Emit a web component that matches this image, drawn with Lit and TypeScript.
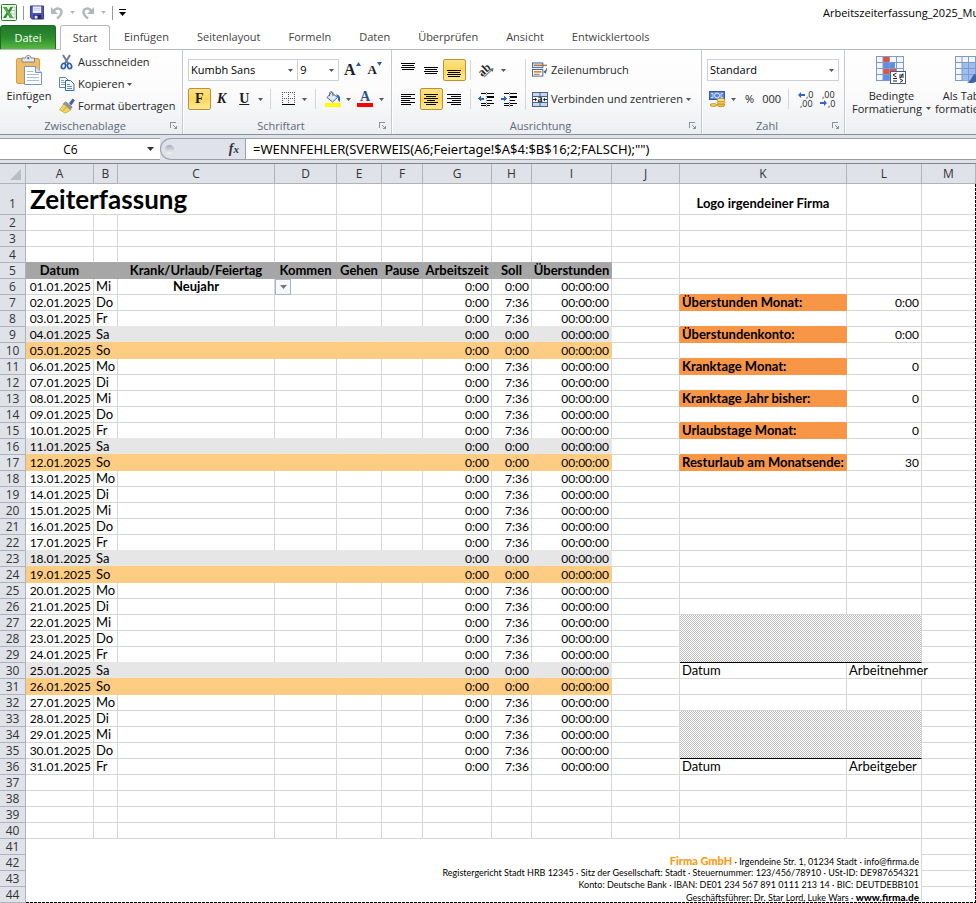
import { LitElement, html, css, svg, nothing, TemplateResult } from "lit";
import { customElement, property } from "lit/decorators.js";
import { classMap } from "lit/directives/class-map.js";

const caret = html`<svg class="caret" width="5" height="3" viewBox="0 0 5 3" aria-hidden="true"><path d="M0 0h5L2.500 3z" fill="currentColor" /></svg>`;

/** Horizontal text lines: each pair is [x, width]. */
const lines = (rows: number[][], h = 14, top = 0) => html`<svg width="15" height=${h} viewBox="0 0 15 ${h}" shape-rendering="crispEdges" aria-hidden="true">
  ${rows.map(([x, w], i) => svg`<rect x=${x} y=${top + i * 2} width=${w} height="1" fill="#000" />`)}
</svg>`;

const spaced = (top: number) => html`<svg width="15" height="16" viewBox="0 0 15 16" shape-rendering="crispEdges" aria-hidden="true">
  ${[[0, 14], [1, 12], [0, 14], [1, 12]].map(([x, w], i) => svg`<rect x=${x} y=${top + [0, 2, 4, 6][i]} width=${w} height="1" fill="#000" />`)}
</svg>`;

const L = [[0, 14], [0, 10], [0, 14], [0, 9], [0, 14], [0, 10]];
const C = [[0, 14], [2, 10], [0, 14], [3, 8], [0, 14], [2, 10]];
const R = [[0, 14], [4, 10], [0, 14], [5, 9], [0, 14], [4, 10]];

const icons = {
  excel: html`<svg width="16" height="17" viewBox="0 0 16 17" aria-hidden="true">
    <rect x=".5" y=".5" width="15" height="16" rx="1" fill="#eef6ea" stroke="#2f7a34" />
    <path d="M10 3h4v11h-4z" fill="#fff" stroke="#a8cfa2" /><path d="M10 6.500h4M10 10h4" stroke="#a8cfa2" />
    <path d="M2 3h3.500l2 3.300L9.400 3H12L8.800 8.400 12.300 14H8.800L6.900 10.400 5 14H2l3.600-5.600z" fill="#2b8a34" />
    <path d="M2 3h2.500l7.800 11H9.800z" fill="#57b04a" /></svg>`,
  save: html`<svg width="14" height="15" viewBox="0 0 15 15" aria-hidden="true">
    <path d="M.5.500h14v14H2L.5 13z" fill="#4a50bd" stroke="#34399a" />
    <rect x="3" y="1" width="9" height="7" fill="#f4f6fb" /><path d="M4 3h7M4 5h7" stroke="#b9c3df" />
    <rect x="4" y="10" width="8" height="4.500" fill="#26295f" /><rect x="5" y="11" width="3" height="3" fill="#e8ebf6" /></svg>`,
  undo: html`<svg width="14" height="14" viewBox="0 0 14 14" aria-hidden="true">
    <path d="M3.500 5.500C5.500 1.500 12 1.500 11.500 6.500c-.3 3-2.500 4.500-4.500 6" fill="none" stroke="#b3b6ba" stroke-width="2.500" /><path d="M1 1v7h7z" fill="#b3b6ba" /></svg>`,
  redo: html`<svg width="14" height="14" viewBox="0 0 14 14" aria-hidden="true">
    <path d="M10.500 5.500C8.500 1.500 2 1.500 2.500 6.500c.3 3 2.500 4.500 4.500 6" fill="none" stroke="#b3b6ba" stroke-width="2.500" /><path d="M13 1v7H6z" fill="#b3b6ba" /></svg>`,
  paste: html`<svg width="28" height="31" viewBox="0 0 28 31" aria-hidden="true">
    <rect x="1.500" y="3.500" width="23" height="25" rx="1.500" fill="#efbd68" stroke="#d99f45" />
    <path d="M7 7V3h3.500c0-1.600 1.200-2.500 2.700-2.500S16 1.400 16 3h3.500v4z" fill="#e7e9ec" stroke="#80858c" /><circle cx="13.200" cy="3.200" r="1.100" fill="#6a6e75" />
    <path d="M9.500 11.500h11l6 6v12h-17z" fill="#fdfeff" stroke="#7b96bd" /><path d="M20.500 11.500v6h6" fill="#d8e4f3" stroke="#7b96bd" />
    <path d="M12 16.500h6M12 19.500h12M12 22.500h12M12 25.500h12" stroke="#a9bddb" /></svg>`,
  cut: html`<svg width="16" height="16" viewBox="0 0 16 16" aria-hidden="true">
    <path d="M4 1l5.500 9M11 1L5.500 10" stroke="#6d7f9c" stroke-width="2" fill="none" />
    <ellipse cx="4.500" cy="12" rx="2" ry="2.700" transform="rotate(20 4.500 12)" fill="none" stroke="#2a5cb0" stroke-width="1.700" />
    <ellipse cx="10.500" cy="12" rx="2" ry="2.700" transform="rotate(-20 10.500 12)" fill="none" stroke="#2a5cb0" stroke-width="1.700" /></svg>`,
  copy: html`<svg width="16" height="16" viewBox="0 0 16 16" aria-hidden="true">
    <path d="M.5 1.500h6l3 3v7h-9z" fill="#fff" stroke="#5a80bb" /><path d="M2 4.500h3M2 6.500h5M2 8.500h5" stroke="#7ea0d4" />
    <path d="M6.500 4.500h5l3.500 3.500v6.500H6.500z" fill="#fff" stroke="#3566ad" /><path d="M8 8.500h3M8 10.500h5M8 12.500h5" stroke="#5d8ad0" /></svg>`,
  brush: html`<svg width="16" height="16" viewBox="0 0 17 16" aria-hidden="true">
    <path d="M11 5l3.500-4.500 2 1.500L13 7z" fill="#4a5fae" stroke="#31407f" stroke-width=".6" />
    <path d="M7 3.500l7 5.500-2 3L4.500 6z" fill="#8c97a5" stroke="#5f6873" stroke-width=".6" />
    <path d="M5 6l7 6c-2 2-4 3-6 3.500C4 14 2 12.500.5 12 2 10.500 4 8.500 5 6z" fill="#f4d565" stroke="#c4982c" stroke-width=".8" /><path d="M4 13l4-4" stroke="#c4982c" /></svg>`,
  growA: html`<svg width="5" height="4" viewBox="0 0 5 4" aria-hidden="true"><path d="M0 4h5L2.500 0z" fill="#2e5ca8" /></svg>`,
  shrinkA: html`<svg width="5" height="4" viewBox="0 0 5 4" aria-hidden="true"><path d="M0 0h5L2.500 4z" fill="#2e5ca8" /></svg>`,
  border: html`<svg width="14" height="14" viewBox="0 0 14 14" aria-hidden="true" shape-rendering="crispEdges">
    <path d="M0 .5h13M0 6.500h13M.5 0v12M6.500 0v12M12.500 0v12" stroke="#555" stroke-dasharray="1 1" /><path d="M0 12.500h13" stroke="#000" /></svg>`,
  bucket: html`<svg width="16" height="16" viewBox="0 0 16 16" aria-hidden="true">
    <rect y="12" width="16" height="4" fill="#ff0" /><path d="M6.500 1.500l6 5-5 4.500-5.500-4.500z" fill="#dfe8f4" stroke="#50688f" />
    <path d="M4.500 5V2.500C4.500 0 8 0 8 2.500V5" fill="none" stroke="#50688f" /><path d="M11 3.500c3 0 5 2 3.800 7.500-1.800-.5-1.800-3-2-4.500z" fill="#2d62b5" /></svg>`,
  fontColor: html`<svg width="16" height="4" viewBox="0 0 16 4" aria-hidden="true"><rect width="16" height="4" fill="#f00" /></svg>`,
  orient: html`<svg width="17" height="15" viewBox="0 0 17 15" aria-hidden="true">
    <path d="M6 14L14 6.500" stroke="#8a8a8a" stroke-width="1.300" /><path d="M15.500 5l-.7 4-3.300-3z" fill="#666" />
    <text x="1" y="12" font-size="12" font-weight="700" font-family="Liberation Serif, serif" transform="rotate(-43 5 9)" fill="#222">ab</text></svg>`,
  outdent: html`<svg width="17" height="15" viewBox="0 0 17 15" aria-hidden="true" shape-rendering="crispEdges">
    <path d="M3 1h5M9 1h7M9 4h7M9 5h7M9 8h5M3 11h5M9 11h7M3 13h5M9 13h3" transform="translate(0 .5)" stroke="#000" /><path d="M8.500 0v15" stroke="#888" stroke-dasharray="1 1" />
    <path d="M0 6.500l3-3v2h3v2H3v2z" fill="#2f66c0" /></svg>`,
  indent: html`<svg width="17" height="15" viewBox="0 0 17 15" aria-hidden="true" shape-rendering="crispEdges">
    <path d="M3 1h5M9 1h7M9 4h7M9 5h7M9 8h5M3 11h5M9 11h7M3 13h5M9 13h3" transform="translate(0 .5)" stroke="#000" /><path d="M8.500 0v15" stroke="#888" stroke-dasharray="1 1" />
    <path d="M6 6.500l-3-3v2H0v2h3v2z" fill="#2f66c0" /></svg>`,
  wrap: html`<svg width="16" height="16" viewBox="0 0 17 16" aria-hidden="true">
    <rect x=".5" y=".5" width="11" height="5" fill="#d5e2f3" stroke="#45618f" /><path d="M2 3h14" stroke="#b5651d" stroke-width="1.300" />
    <rect x=".5" y="7.500" width="11" height="7" fill="#fff" stroke="#45618f" /><path d="M2 10h8M2 12.500h6" stroke="#b5651d" stroke-width="1.200" />
    <path d="M15.500 6v2.500c0 1-1 1.500-1.500 1.500" fill="none" stroke="#45618f" /><path d="M12 10l3-2.500V12z" fill="#45618f" /></svg>`,
  merge: html`<svg width="16" height="15" viewBox="0 0 16 15" aria-hidden="true">
    <rect x=".5" y=".5" width="15" height="14" fill="#c9d8ee" stroke="#45618f" /><path d="M0 4.500h16M0 10.500h16M8 0v4M8 11v4" stroke="#45618f" />
    <rect x="1" y="5" width="14" height="5" fill="#fff" /><path d="M1 7.500h3M12 7.500h3" stroke="#222" /><path d="M3 5.500v4l2-2zM13 5.500v4l-2-2z" fill="#222" />
    <text x="5.500" y="10" font-size="10" font-weight="700" font-family="Liberation Serif, serif" fill="#111">a</text></svg>`,
  money: html`<svg width="17" height="16" viewBox="0 0 17 16" aria-hidden="true">
    <rect x=".5" y=".5" width="15" height="8" fill="#5d87d6" stroke="#34589f" /><circle cx="8" cy="4.500" r="2.500" fill="none" stroke="#e4edfb" />
    <path d="M2 2.500h2v4H2M14 2.500h-2v4h2" fill="none" stroke="#c9dafa" />
    <ellipse cx="12" cy="14" rx="4" ry="1.700" fill="#f1bc3d" stroke="#b5811c" stroke-width=".7" /><ellipse cx="12" cy="11.500" rx="4" ry="1.700" fill="#f6cb58" stroke="#b5811c" stroke-width=".7" />
    <ellipse cx="12" cy="9" rx="4" ry="1.700" fill="#ffe08a" stroke="#b5811c" stroke-width=".7" /><ellipse cx="4.500" cy="14" rx="3.300" ry="1.500" fill="#f6cb58" stroke="#b5811c" stroke-width=".7" /></svg>`,
  decMore: html`<svg width="16" height="17" viewBox="0 0 16 17" aria-hidden="true" font-size="9" font-family="Open Sans, sans-serif" fill="#222">
    <path d="M0 4l3-3v2h4v2H3v2z" fill="#2f66c0" /><text x="8" y="7">,0</text><text x="2" y="16">,00</text></svg>`,
  decLess: html`<svg width="16" height="17" viewBox="0 0 16 17" aria-hidden="true" font-size="9" font-family="Open Sans, sans-serif" fill="#222">
    <path d="M7 12L4 9v2H0v2h4v2z" fill="#2f66c0" /><text x="2" y="7">,00</text><text x="8" y="16">,0</text></svg>`,
  condFormat: html`<svg width="30" height="28" viewBox="0 0 30 28" aria-hidden="true">
    <rect x=".5" y=".5" width="27" height="24" fill="#f3f7fd" stroke="#7f9bca" />
    <rect x="7" y="1" width="6" height="6" fill="#e8503a" /><rect x="7" y="7" width="12" height="6" fill="#5d8ee6" /><rect x="7" y="13" width="13" height="6" fill="#e8503a" /><rect x="7" y="19" width="6" height="5" fill="#5d8ee6" />
    <path d="M7 0v25M13.500 0v25M20.500 0v25M0 6.500h28M0 12.500h28M0 18.500h28" stroke="#7f9bca" fill="none" />
    <rect x="14.500" y="15.500" width="15" height="12" fill="#fff" stroke="#445c86" />
    <path d="M20.500 17l-3.500 2 3.500 2M17 22.500h4M17 25h4M23 19h5M23 21h5M27 17.500l-3 5M24 23l3 1.500-3 1.800" stroke="#222" fill="none" /></svg>`,
  tableFormat: html`<svg width="30" height="28" viewBox="0 0 30 28" aria-hidden="true">
    <rect x=".5" y=".5" width="27" height="24" fill="#f3f7fd" stroke="#7f9bca" /><rect x="7" y="6.500" width="21" height="18" fill="#9cbdf0" />
    <path d="M7 0v25M13.500 0v25M20.500 0v25M0 6.500h28M0 12.500h28M0 18.500h28" stroke="#7f9bca" fill="none" />
    <path d="M30 9l-9 9 2 2 9-9z" fill="#d9953a" /><path d="M20 18c-3 1-3 6-8 8.500 5 1.500 11 .5 11.500-5.500z" fill="#3f63a5" /></svg>`,
  launcher: html`<svg width="8" height="8" viewBox="0 0 8 8" aria-hidden="true" shape-rendering="crispEdges">
    <path d="M.5 6V.5H6" fill="none" stroke="#8d939c" /><path d="M3 3l3 3" stroke="#8d939c" /><path d="M7 3v4H3z" fill="#8d939c" /></svg>`,
};

@customElement("ribbon-group")
class RibbonGroup extends LitElement {
  static styles = css`
    :host { display: flex; flex-direction: column; box-sizing: border-box; height: 84px; border-right: 1px solid #c3c9d1; box-shadow: 1px 0 #fff; }
    .body { flex: 1; min-width: 0; }
    footer { display: flex; align-items: center; height: 16px; padding-right: 4px; color: #5d6978; }
    .name { flex: 1; text-align: center; white-space: nowrap; }
    button { display: flex; border: 0; padding: 0; background: none; }
  `;
  @property() label = "";
  render() {
    return html`<div class="body"><slot></slot></div>
      <footer><span class="name">${this.label}</span>${this.label
        ? html`<button aria-label="${this.label}: weitere Optionen">${icons.launcher}</button>` : nothing}</footer>`;
  }
}

const days = ["Mi", "Do", "Fr", "Sa", "So", "Mo", "Di"];
const columns = "ABCDEFGHIJKLM".split("");
const headings = ["Datum", "", "Krank/Urlaub/Feiertag", "Kommen", "Gehen", "Pause", "Arbeitszeit", "Soll", "Überstunden"];
const summary: Record<number, [string, string]> = {
  7: ["Überstunden Monat:", "0:00"],
  9: ["Überstundenkonto:", "0:00"],
  11: ["Kranktage Monat:", "0"],
  13: ["Kranktage Jahr bisher:", "0"],
  15: ["Urlaubstage Monat:", "0"],
  17: ["Resturlaub am Monatsende:", "30"],
};
const signatures: Record<number, string> = { 30: "Arbeitnehmer", 36: "Arbeitgeber" };

/** Background of a cell, by row number and column index. */
function fill(r: number, c: number): string {
  if (c >= 0 && c <= 8) {
    if (r === 5) return "head";
    if (r >= 6 && r <= 36) {
      const day = days[(r - 6) % 7];
      if (day === "Sa") return "sat";
      if (day === "So") return "sun";
    }
  }
  if (c === 10 && summary[r]) return "sum";
  return "";
}

@customElement("work-sheet")
class WorkSheet extends LitElement {
  static styles = css`
    :host { display: block; position: relative; }
    table { table-layout: fixed; width: 100%; border-collapse: separate; border-spacing: 0; }
    th, td { box-sizing: border-box; height: 16px; padding: 0 2px; line-height: 15px; white-space: nowrap; font-weight: 400; border: 0 solid #d6d6d6; border-width: 0 1px 1px 0; }
    .w-h { width: 26px; } .w-a, .w-j { width: 68px; } .w-b { width: 24px; } .w-c { width: 157px; } .w-d { width: 62px; } .w-e { width: 45px; }
    .w-f { width: 41px; } .w-g { width: 69px; } .w-h2 { width: 40px; } .w-i { width: 80px; } .w-k { width: 167px; } .w-l { width: 75px; }
    th { background: #dfe2e8; border-color: #b0b4ba; color: #333; padding: 0; font: 12px/15px "Open Sans", sans-serif; }
    thead th { height: 20px; line-height: 19px; }
    thead th:first-child { vertical-align: bottom; }
    .corner { display: block; margin: 0 4px 3px auto; }
    tr.first th, tr.first td { height: 31px; vertical-align: bottom; }
    tr.first th { padding-bottom: 3px; }
    td.title { font-size: 26px; line-height: 30px; font-weight: 700; padding-left: 4px; }
    td.logo { font-weight: 700; text-align: center; padding-bottom: 3px; }
    .right { text-align: right; font-size: 12px; }
    .center { text-align: center; }
    .heading { padding: 0; }
    .bold { font-weight: 700; }
    .head { background: #a6a6a6; } .sat { background: #e6e6e6; } .sun { background: #ffcc84; } .sum { background: #f79646; }
    .r-head { border-right-color: #a6a6a6; } .r-sat { border-right-color: #e6e6e6; } .r-sun { border-right-color: #ffcc84; } .r-sum { border-right-color: #f79646; }
    .b-head { border-bottom-color: #a6a6a6; } .b-sat { border-bottom-color: #e6e6e6; } .b-sun { border-bottom-color: #ffcc84; } .b-sum { border-bottom-color: #f79646; }
    .spill { border-right-color: transparent; }
    .sign { border-bottom-color: #000; background: repeating-conic-gradient(#bebebe 0 25%, #fff 0 50%) 0 0 / 2px 2px; }
    .drop { position: relative; }
    .drop button { position: absolute; left: 0; top: 0; width: 16px; height: 16px; display: grid; place-items: center; padding: 0; border: 1px solid #a9b3c1; background: #f6f8fb; color: #777; }
    td.imprint { vertical-align: bottom; text-align: right; font-size: 9px; line-height: 12px; border-bottom: 0; white-space: normal; }
    .imprint p { margin: 0; height: 12px; }
    .firm { color: #ff9a14; font-weight: 900; font-size: 11px; }
    .imprint a { color: #000; font-weight: 900; font-size: 10px; text-decoration: none; }
    .page { position: absolute; top: 20px; right: 0; bottom: 0; left: 26px; pointer-events: none;
      background: repeating-linear-gradient(#000 0 3px, #fff 3px 4px) right / 1px 100% no-repeat, repeating-linear-gradient(90deg, #000 0 3px, #fff 3px 4px) bottom / 100% 1px no-repeat; }
  `;

  cell(r: number, c: number): TemplateResult | typeof nothing {
    if (r === 1 && c === 0) return html`<td colspan="3" class="title">Zeiterfassung</td>`;
    if (r === 1 && c < 3) return nothing;
    if (r === 1 && c === 10) return html`<td class="logo">Logo irgendeiner Firma</td>`;
    if (r >= 41 && c < 12) {
      return r === 41 && c === 0
        ? html`<td colspan="12" rowspan="4" class="imprint">
            <p><span class="firm">Firma GmbH</span> · Irgendeine Str. 1, 01234 Stadt · info@firma.de</p>
            <p>Registergericht Stadt HRB 12345 · Sitz der Gesellschaft: Stadt · Steuernummer: 123/456/78910 · USt-ID: DE987654321</p>
            <p>Konto: Deutsche Bank · IBAN: DE01 234 567 891 0111 213 14 · BIC: DEUTDEBB101</p>
            <p>Geschäftsführer: Dr. Star Lord, Luke Wars · <a href="#">www.firma.de</a></p>
          </td>`
        : nothing;
    }
    if ((r === 27 || r === 33) && c === 10) return html`<td colspan="2" rowspan="3" class="sign"></td>`;
    if (((r > 26 && r < 30) || (r > 32 && r < 36)) && (c === 10 || c === 11)) return nothing;

    const own = fill(r, c);
    const right = own || fill(r, c + 1);
    const bottom = fill(r + 1, c) || own;
    const cls: Record<string, boolean> = {};
    if (own) cls[own] = true;
    if (right) cls["r-" + right] = true;
    if (bottom) cls["b-" + bottom] = true;

    let text: unknown = "";
    if (r === 5 && c < 9) {
      text = headings[c];
      cls.center = cls.bold = cls.heading = true;
    } else if (r >= 6 && r <= 36 && c < 9) {
      const date = r - 5;
      const day = days[(date - 1) % 7];
      const free = date === 1 || day === "Sa" || day === "So";
      if (c === 0) text = `${String(date).padStart(2, "0")}.01.2025`;
      if (c === 1) text = day;
      if (c === 2 && date === 1) text = "Neujahr";
      if (c === 6) text = "0:00";
      if (c === 7) text = free ? "0:00" : "7:36";
      if (c === 8) text = "00:00:00";
      if (c === 2) cls.center = cls.bold = true;
      cls.right = c === 0 || c > 5;
      if (c === 3 && date === 1) {
        cls.drop = true;
        text = html`<button aria-label="Auswahlliste öffnen"><svg width="7" height="4" viewBox="0 0 7 4"><path d="M0 0h7L3.500 4z" fill="currentColor" /></svg></button>`;
      }
    }
    if (summary[r] && c === 10) { text = summary[r][0]; cls.bold = true; }
    if (summary[r] && c === 11) { text = summary[r][1]; cls.right = true; }
    if (signatures[r] && c === 10) text = "Datum";
    if (signatures[r] && c === 11) { text = signatures[r]; cls.spill = r === 30; }
    return html`<td class=${classMap(cls)}>${text}</td>`;
  }

  render() {
    return html`<table>
        <colgroup><col class="w-h" /><col class="w-a" /><col class="w-b" /><col class="w-c" /><col class="w-d" /><col class="w-e" /><col class="w-f" /><col class="w-g" /><col class="w-h2" /><col class="w-i" /><col class="w-j" /><col class="w-k" /><col class="w-l" /><col /></colgroup>
        <thead><tr><th><svg class="corner" width="11" height="11" viewBox="0 0 11 11"><path d="M11 0v11H0z" fill="#b9bdc4" /></svg></th>${columns.map((c) => html`<th scope="col">${c}</th>`)}</tr></thead>
        <tbody>${Array.from({ length: 44 }, (_, i) => i + 1).map((r) => html`<tr class=${r === 1 ? "first" : ""}><th scope="row">${r}</th>${columns.map((_, c) => this.cell(r, c))}</tr>`)}</tbody>
      </table>
      <div class="page"></div>`;
  }
}

@customElement("app-root")
class AppRoot extends LitElement {
  static styles = css`
    :host { display: block; overflow: hidden; background: #fff; color: #262626; font: 11px/14px "Open Sans", "Noto Sans", sans-serif; }
    button, select, input { font: inherit; color: inherit; }
    button { display: inline-flex; align-items: center; justify-content: center; box-sizing: border-box; padding: 0; border: 0; background: none; white-space: nowrap; }
    svg { flex: none; overflow: visible; }
    .caret { color: #555; }
    .titlebar { display: flex; align-items: center; height: 25px; padding-left: 1px; }
    .titlebar .sep { width: 1px; height: 14px; background: #999; }
    .quick { display: flex; align-items: center; gap: 6px; height: 22px; flex: 1; }
    .quick .caret { color: #b3b6ba; }
    .titlebar h1 { margin: 0; width: 153px; overflow: hidden; white-space: nowrap; font-size: 11px; line-height: 16px; font-weight: 400; color: #000; }
    .tabs { display: flex; height: 24px; border-bottom: 1px solid #b6babf; }
    .tabs button { height: 24px; padding: 0 14px; color: #444; }
    .tabs .file { width: 56px; padding: 0; margin-right: 4px; border: 1px solid #1d6b22; border-bottom: 0; border-radius: 3px 3px 0 0; color: #fff; background: linear-gradient(#23762a, #2b8c2e 50%, #58b840); }
    .tabs .active { width: 50px; height: 25px; padding: 0; border: 1px solid #b6babf; border-bottom: 0; border-radius: 3px 3px 0 0; background: #fff; }
    .ribbon { display: flex; background: linear-gradient(#fff, #fbfbfc 50%, #eceef1); border-bottom: 1px solid #8b9097; height: 84px; overflow: hidden; }
    ribbon-group { flex: none; }
    .g1 { width: 183px; } .g2 { width: 209px; } .g3 { width: 310px; } .g4 { width: 143px; } .g5 { width: 300px; border: 0; }
    .clip { display: flex; gap: 4px; padding: 1px 0 0 3px; }
    .big { flex-direction: column; justify-content: flex-start; width: 52px; padding-top: 4px; line-height: 13px; }
    .big .gap { margin: 3px 0 4px; }
    .list { display: flex; flex-direction: column; align-items: flex-start; }
    .list button { height: 22px; gap: 3px; }
    .rows { display: flex; flex-direction: column; gap: 7px; padding: 9px 5px 0; }
    .row { display: flex; align-items: center; height: 22px; }
    .apart { gap: 1px; }
    .combo { display: flex; align-items: center; box-sizing: border-box; height: 22px; border: 1px solid #cdd1d6; background: #fff; position: relative; color: #000; }
    .combo select { appearance: none; width: 100%; height: 20px; padding: 0 2px; border: 0; background: none; }
    .combo .caret { position: absolute; right: 4px; pointer-events: none; }
    .font { width: 113px; } .size { width: 43px; margin-left: -1px; } .format { width: 134px; }
    .tool { width: 23px; height: 22px; }
    .on { border: 1px solid #c08f2e; border-radius: 2px; background: linear-gradient(#fde28a, #ffd65c 50%, #ffe998); }
    .serif { font: 700 14px/18px "Liberation Serif", serif; color: #1c1c1c; }
    .italic { font-style: italic; }
    .under { text-decoration: underline; }
    .grow { font-size: 16px; margin-left: 2px; }
    .shrink { font-size: 13px; }
    .grow svg, .shrink svg { align-self: flex-start; margin-top: 3px; }
    .arrow { width: 10px; height: 22px; }
    .vsep { width: 1px; height: 20px; margin: 0 6px 0 5px; background: #d3d7dc; }
    .letter { flex-direction: column; line-height: 12px; color: #2d4f8c; }
    .split { display: flex; padding: 9px 4px 0 5px; }
    .split .vsep { margin: 0 4px; }
    .split .tall { height: 51px; }
    .split .col { display: flex; flex-direction: column; align-items: flex-start; gap: 7px; }
    .wide { height: 22px; gap: 3px; padding-left: 2px; }
    .large { display: flex; gap: 4px; padding: 6px 0 0 7px; }
    .large button { flex-direction: column; line-height: 13px; }
    .large span { display: flex; align-items: center; gap: 4px; }
    .large .first { padding-top: 5px; }
    .formula { display: flex; align-items: center; height: 28px; background: #dfe2ea; border-bottom: 1px solid #80858c; color: #000; }
    .formula input, .formula .name { box-sizing: border-box; height: 22px; border: 1px solid #9ba0a8; background: #fff; }
    .formula .name { display: flex; align-items: center; width: 160px; border-left: 0; border-right: 0; padding-right: 6px; }
    .formula .name input { flex: 1; min-width: 0; height: 20px; border: 0; padding: 0 6px 0 0; text-align: center; font-size: 12px; }
    .formula .name .caret { color: #333; }
    .formula .fx { width: 85px; height: 22px; justify-content: space-between; padding: 0 6px 0 4px; border: 1px solid #9ba0a8; border-right: 0; border-radius: 11px 0 0 11px; font: italic 700 14px/18px "Liberation Serif", serif; color: #333; }
    .fx i { width: 9px; height: 9px; border-radius: 50%; background: linear-gradient(#a9aeb6, #f3f4f6); }
    .fx small { font-size: 11px; }
    .formula .expr { flex: 1; min-width: 0; border-right: 0; padding: 0 7px; font-family: "Noto Sans", sans-serif; font-size: 13px; }
    work-sheet { color: #000; font: 13px/15px "Lato", sans-serif; }
  `;

  render() {
    return html`
      <header class="titlebar">
        <div class="quick">
          <button aria-label="Excel">${icons.excel}</button><span class="sep"></span>
          <button aria-label="Speichern">${icons.save}</button>
          <button aria-label="Rückgängig">${icons.undo}</button>${caret}
          <button aria-label="Wiederholen">${icons.redo}</button>${caret}
          <span class="sep"></span>
          <button aria-label="Symbolleiste anpassen"><svg width="7" height="7" viewBox="0 0 7 7"><path d="M0 0h7v1H0zM0 3h7L3.500 7z" /></svg></button>
        </div>
        <h1>Arbeitszeiterfassung_2025_Muster.xlsx</h1>
      </header>
      <nav class="tabs" aria-label="Menüband">
        <button class="file">Datei</button><button class="active">Start</button>
        ${["Einfügen", "Seitenlayout", "Formeln", "Daten", "Überprüfen", "Ansicht", "Entwicklertools"].map((t) => html`<button>${t}</button>`)}
      </nav>
      <section class="ribbon">
        <ribbon-group class="g1" label="Zwischenablage">
          <div class="clip">
            <button class="big">${icons.paste}<span class="gap">Einfügen</span>${caret}</button>
            <div class="list">
              <button>${icons.cut}Ausschneiden</button>
              <button>${icons.copy}<span>Kopieren</span> ${caret}</button>
              <button>${icons.brush}Format übertragen</button>
            </div>
          </div>
        </ribbon-group>
        <ribbon-group class="g2" label="Schriftart">
          <div class="rows">
            <div class="row">
              <label class="combo font"><select aria-label="Schriftart"><option>Kumbh Sans</option></select>${caret}</label>
              <label class="combo size"><select aria-label="Schriftgrad"><option>9</option></select>${caret}</label>
              <button class="tool serif grow" aria-label="Schriftart vergrößern">A${icons.growA}</button>
              <button class="tool serif shrink" aria-label="Schriftart verkleinern">A${icons.shrinkA}</button>
            </div>
            <div class="row">
              <button class="tool serif on">F</button><button class="tool serif italic">K</button><button class="tool serif under">U</button><button class="arrow" aria-label="Unterstreichung">${caret}</button>
              <span class="vsep"></span>
              <button class="tool" aria-label="Rahmen">${icons.border}</button><button class="arrow" aria-label="Rahmenarten">${caret}</button>
              <span class="vsep"></span>
              <button class="tool" aria-label="Füllfarbe">${icons.bucket}</button><button class="arrow" aria-label="Füllfarben">${caret}</button>
              <button class="tool serif letter" aria-label="Schriftfarbe">A${icons.fontColor}</button><button class="arrow" aria-label="Schriftfarben">${caret}</button>
            </div>
          </div>
        </ribbon-group>
        <ribbon-group class="g3" label="Ausrichtung">
          <div class="split">
            <div class="col">
              <div class="row">
                <button class="tool" aria-label="Oben ausrichten">${spaced(1)}</button>
                <button class="tool" aria-label="Zentriert ausrichten">${spaced(5)}</button>
                <button class="tool on" aria-label="Unten ausrichten">${spaced(8)}</button>
                <span class="vsep"></span>
                <button class="tool" aria-label="Orientierung">${icons.orient}</button><button class="arrow" aria-label="Drehwinkel">${caret}</button>
              </div>
              <div class="row">
                <button class="tool" aria-label="Linksbündig">${lines(L, 13, 1)}</button>
                <button class="tool on" aria-label="Zentriert">${lines(C, 13, 1)}</button>
                <button class="tool" aria-label="Rechtsbündig">${lines(R, 13, 1)}</button>
                <span class="vsep"></span>
                <button class="tool" aria-label="Einzug verkleinern">${icons.outdent}</button><button class="tool" aria-label="Einzug vergrößern">${icons.indent}</button>
              </div>
            </div>
            <span class="vsep tall"></span>
            <div class="col">
              <button class="wide">${icons.wrap}Zeilenumbruch</button>
              <button class="wide">${icons.merge}<span>Verbinden und zentrieren</span> ${caret}</button>
            </div>
          </div>
        </ribbon-group>
        <ribbon-group class="g4" label="Zahl">
          <div class="rows">
            <div class="row"><label class="combo format"><select aria-label="Zahlenformat"><option>Standard</option></select>${caret}</label></div>
            <div class="row apart">
              <button class="tool" aria-label="Buchhaltungszahlenformat">${icons.money}</button><button class="arrow" aria-label="Währungen">${caret}</button>
              <button class="tool">%</button><button class="tool">000</button>
              <span class="vsep"></span>
              <button class="tool" aria-label="Dezimalstelle hinzufügen">${icons.decMore}</button><button class="tool" aria-label="Dezimalstelle löschen">${icons.decLess}</button>
            </div>
          </div>
        </ribbon-group>
        <ribbon-group class="g5">
          <div class="large">
            <button>${icons.condFormat}<span class="first">Bedingte</span><span>Formatierung ${caret}</span></button>
            <button>${icons.tableFormat}<span class="first">Als Tabelle</span><span>formatieren ${caret}</span></button>
          </div>
        </ribbon-group>
      </section>
      <section class="formula">
        <div class="name"><input aria-label="Namenfeld" value="C6" /><svg class="caret" width="7" height="4" viewBox="0 0 7 4"><path d="M0 0h7L3.500 4z" fill="currentColor" /></svg></div>
        <button class="fx" aria-label="Funktion einfügen"><i></i><span>f<small>x</small></span></button>
        <input class="expr" aria-label="Bearbeitungsleiste" .value=${'=WENNFEHLER(SVERWEIS(A6;Feiertage!$A$4:$B$16;2;FALSCH);"")'} />
      </section>
      <work-sheet></work-sheet>
    `;
  }
}
